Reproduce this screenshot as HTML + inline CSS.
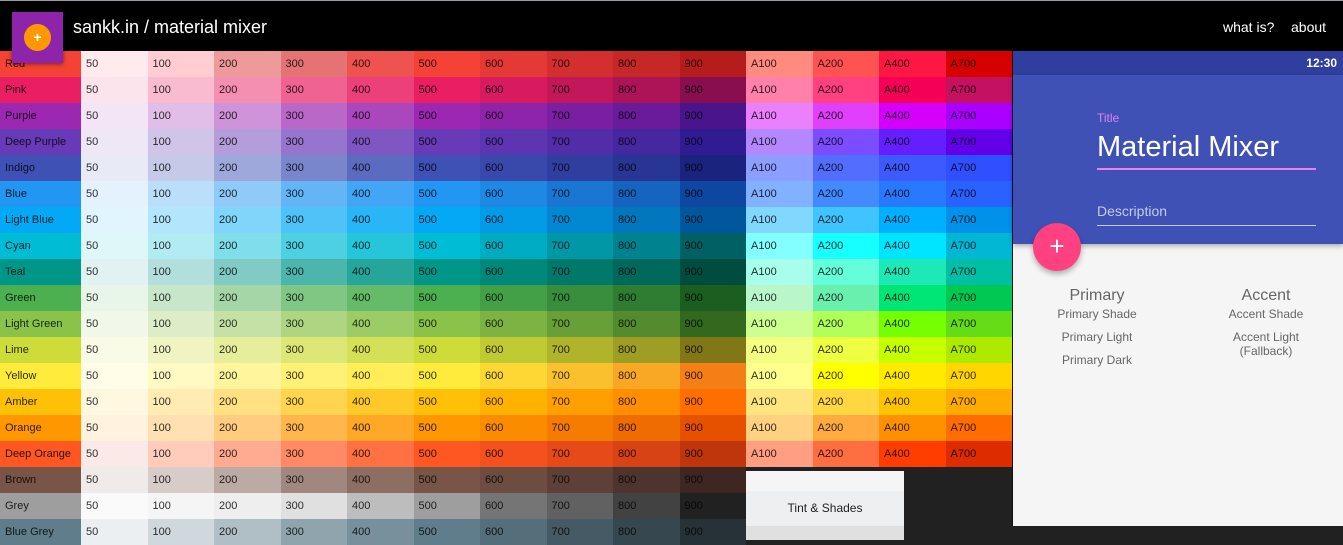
<!DOCTYPE html>
<html><head><meta charset="utf-8"><style>
*{margin:0;padding:0;box-sizing:border-box}
body{width:1343px;height:540px;overflow:hidden;background:#212121;font-family:"Liberation Sans",sans-serif;position:relative}
.hdr{position:absolute;left:0;top:0;width:1343px;height:51px;background:#000;border-top:1px solid #99a}
.grid{position:absolute;left:0;top:51px;display:grid;grid-template-columns:81px repeat(14,66.5px);grid-auto-rows:26px}
.grid div{font-size:11px;color:rgba(0,0,0,.82);line-height:26px;padding-left:5px;white-space:nowrap}
.logo{position:absolute;left:12px;top:12px;width:51px;height:51px;background:#8e24aa;box-shadow:0 1px 4px rgba(0,0,0,.5)}
.logo i{position:absolute;left:12px;top:12px;width:27px;height:27px;border-radius:50%;background:#ff9800;color:#fff;font-style:normal;font-size:14px;text-align:center;line-height:26px;font-weight:bold}
</style></head><body>
<div class="hdr">
<div style="position:absolute;left:73px;top:16px;color:#fff;font-size:18px">sankk.in / material mixer</div>
<div style="position:absolute;left:1223px;top:18px;color:#fff;font-size:14px">what is?</div>
<div style="position:absolute;left:1291px;top:18px;color:#fff;font-size:14px">about</div>
</div>
<div class="grid">
<div style="background:#f44336">Red</div><div style="background:#ffebee">50</div><div style="background:#ffcdd2">100</div><div style="background:#ef9a9a">200</div><div style="background:#e57373">300</div><div style="background:#ef5350">400</div><div style="background:#f44336">500</div><div style="background:#e53935">600</div><div style="background:#d32f2f">700</div><div style="background:#c62828">800</div><div style="background:#b71c1c">900</div><div style="background:#ff8a80">A100</div><div style="background:#ff5252">A200</div><div style="background:#ff1744">A400</div><div style="background:#d50000">A700</div>
<div style="background:#e91e63">Pink</div><div style="background:#fce4ec">50</div><div style="background:#f8bbd0">100</div><div style="background:#f48fb1">200</div><div style="background:#f06292">300</div><div style="background:#ec407a">400</div><div style="background:#e91e63">500</div><div style="background:#d81b60">600</div><div style="background:#c2185b">700</div><div style="background:#ad1457">800</div><div style="background:#880e4f">900</div><div style="background:#ff80ab">A100</div><div style="background:#ff4081">A200</div><div style="background:#f50057">A400</div><div style="background:#c51162">A700</div>
<div style="background:#9c27b0">Purple</div><div style="background:#f3e5f5">50</div><div style="background:#e1bee7">100</div><div style="background:#ce93d8">200</div><div style="background:#ba68c8">300</div><div style="background:#ab47bc">400</div><div style="background:#9c27b0">500</div><div style="background:#8e24aa">600</div><div style="background:#7b1fa2">700</div><div style="background:#6a1b9a">800</div><div style="background:#4a148c">900</div><div style="background:#ea80fc">A100</div><div style="background:#e040fb">A200</div><div style="background:#d500f9">A400</div><div style="background:#aa00ff">A700</div>
<div style="background:#673ab7">Deep Purple</div><div style="background:#ede7f6">50</div><div style="background:#d1c4e9">100</div><div style="background:#b39ddb">200</div><div style="background:#9575cd">300</div><div style="background:#7e57c2">400</div><div style="background:#673ab7">500</div><div style="background:#5e35b1">600</div><div style="background:#512da8">700</div><div style="background:#4527a0">800</div><div style="background:#311b92">900</div><div style="background:#b388ff">A100</div><div style="background:#7c4dff">A200</div><div style="background:#651fff">A400</div><div style="background:#6200ea">A700</div>
<div style="background:#3f51b5">Indigo</div><div style="background:#e8eaf6">50</div><div style="background:#c5cae9">100</div><div style="background:#9fa8da">200</div><div style="background:#7986cb">300</div><div style="background:#5c6bc0">400</div><div style="background:#3f51b5">500</div><div style="background:#3949ab">600</div><div style="background:#303f9f">700</div><div style="background:#283593">800</div><div style="background:#1a237e">900</div><div style="background:#8c9eff">A100</div><div style="background:#536dfe">A200</div><div style="background:#3d5afe">A400</div><div style="background:#304ffe">A700</div>
<div style="background:#2196f3">Blue</div><div style="background:#e3f2fd">50</div><div style="background:#bbdefb">100</div><div style="background:#90caf9">200</div><div style="background:#64b5f6">300</div><div style="background:#42a5f5">400</div><div style="background:#2196f3">500</div><div style="background:#1e88e5">600</div><div style="background:#1976d2">700</div><div style="background:#1565c0">800</div><div style="background:#0d47a1">900</div><div style="background:#82b1ff">A100</div><div style="background:#448aff">A200</div><div style="background:#2979ff">A400</div><div style="background:#2962ff">A700</div>
<div style="background:#03a9f4">Light Blue</div><div style="background:#e1f5fe">50</div><div style="background:#b3e5fc">100</div><div style="background:#81d4fa">200</div><div style="background:#4fc3f7">300</div><div style="background:#29b6f6">400</div><div style="background:#03a9f4">500</div><div style="background:#039be5">600</div><div style="background:#0288d1">700</div><div style="background:#0277bd">800</div><div style="background:#01579b">900</div><div style="background:#80d8ff">A100</div><div style="background:#40c4ff">A200</div><div style="background:#00b0ff">A400</div><div style="background:#0091ea">A700</div>
<div style="background:#00bcd4">Cyan</div><div style="background:#e0f7fa">50</div><div style="background:#b2ebf2">100</div><div style="background:#80deea">200</div><div style="background:#4dd0e1">300</div><div style="background:#26c6da">400</div><div style="background:#00bcd4">500</div><div style="background:#00acc1">600</div><div style="background:#0097a7">700</div><div style="background:#00838f">800</div><div style="background:#006064">900</div><div style="background:#84ffff">A100</div><div style="background:#18ffff">A200</div><div style="background:#00e5ff">A400</div><div style="background:#00b8d4">A700</div>
<div style="background:#009688">Teal</div><div style="background:#e0f2f1">50</div><div style="background:#b2dfdb">100</div><div style="background:#80cbc4">200</div><div style="background:#4db6ac">300</div><div style="background:#26a69a">400</div><div style="background:#009688">500</div><div style="background:#00897b">600</div><div style="background:#00796b">700</div><div style="background:#00695c">800</div><div style="background:#004d40">900</div><div style="background:#a7ffeb">A100</div><div style="background:#64ffda">A200</div><div style="background:#1de9b6">A400</div><div style="background:#00bfa5">A700</div>
<div style="background:#4caf50">Green</div><div style="background:#e8f5e9">50</div><div style="background:#c8e6c9">100</div><div style="background:#a5d6a7">200</div><div style="background:#81c784">300</div><div style="background:#66bb6a">400</div><div style="background:#4caf50">500</div><div style="background:#43a047">600</div><div style="background:#388e3c">700</div><div style="background:#2e7d32">800</div><div style="background:#1b5e20">900</div><div style="background:#b9f6ca">A100</div><div style="background:#69f0ae">A200</div><div style="background:#00e676">A400</div><div style="background:#00c853">A700</div>
<div style="background:#8bc34a">Light Green</div><div style="background:#f1f8e9">50</div><div style="background:#dcedc8">100</div><div style="background:#c5e1a5">200</div><div style="background:#aed581">300</div><div style="background:#9ccc65">400</div><div style="background:#8bc34a">500</div><div style="background:#7cb342">600</div><div style="background:#689f38">700</div><div style="background:#558b2f">800</div><div style="background:#33691e">900</div><div style="background:#ccff90">A100</div><div style="background:#b2ff59">A200</div><div style="background:#76ff03">A400</div><div style="background:#64dd17">A700</div>
<div style="background:#cddc39">Lime</div><div style="background:#f9fbe7">50</div><div style="background:#f0f4c3">100</div><div style="background:#e6ee9c">200</div><div style="background:#dce775">300</div><div style="background:#d4e157">400</div><div style="background:#cddc39">500</div><div style="background:#c0ca33">600</div><div style="background:#afb42b">700</div><div style="background:#9e9d24">800</div><div style="background:#827717">900</div><div style="background:#f4ff81">A100</div><div style="background:#eeff41">A200</div><div style="background:#c6ff00">A400</div><div style="background:#aeea00">A700</div>
<div style="background:#ffeb3b">Yellow</div><div style="background:#fffde7">50</div><div style="background:#fff9c4">100</div><div style="background:#fff59d">200</div><div style="background:#fff176">300</div><div style="background:#ffee58">400</div><div style="background:#ffeb3b">500</div><div style="background:#fdd835">600</div><div style="background:#fbc02d">700</div><div style="background:#f9a825">800</div><div style="background:#f57f17">900</div><div style="background:#ffff8d">A100</div><div style="background:#ffff00">A200</div><div style="background:#ffea00">A400</div><div style="background:#ffd600">A700</div>
<div style="background:#ffc107">Amber</div><div style="background:#fff8e1">50</div><div style="background:#ffecb3">100</div><div style="background:#ffe082">200</div><div style="background:#ffd54f">300</div><div style="background:#ffca28">400</div><div style="background:#ffc107">500</div><div style="background:#ffb300">600</div><div style="background:#ffa000">700</div><div style="background:#ff8f00">800</div><div style="background:#ff6f00">900</div><div style="background:#ffe57f">A100</div><div style="background:#ffd740">A200</div><div style="background:#ffc400">A400</div><div style="background:#ffab00">A700</div>
<div style="background:#ff9800">Orange</div><div style="background:#fff3e0">50</div><div style="background:#ffe0b2">100</div><div style="background:#ffcc80">200</div><div style="background:#ffb74d">300</div><div style="background:#ffa726">400</div><div style="background:#ff9800">500</div><div style="background:#fb8c00">600</div><div style="background:#f57c00">700</div><div style="background:#ef6c00">800</div><div style="background:#e65100">900</div><div style="background:#ffd180">A100</div><div style="background:#ffab40">A200</div><div style="background:#ff9100">A400</div><div style="background:#ff6d00">A700</div>
<div style="background:#ff5722">Deep Orange</div><div style="background:#fbe9e7">50</div><div style="background:#ffccbc">100</div><div style="background:#ffab91">200</div><div style="background:#ff8a65">300</div><div style="background:#ff7043">400</div><div style="background:#ff5722">500</div><div style="background:#f4511e">600</div><div style="background:#e64a19">700</div><div style="background:#d84315">800</div><div style="background:#bf360c">900</div><div style="background:#ff9e80">A100</div><div style="background:#ff6e40">A200</div><div style="background:#ff3d00">A400</div><div style="background:#dd2c00">A700</div>
<div style="background:#795548">Brown</div><div style="background:#efebe9">50</div><div style="background:#d7ccc8">100</div><div style="background:#bcaaa4">200</div><div style="background:#a1887f">300</div><div style="background:#8d6e63">400</div><div style="background:#795548">500</div><div style="background:#6d4c41">600</div><div style="background:#5d4037">700</div><div style="background:#4e342e">800</div><div style="background:#3e2723">900</div><div></div><div></div><div></div><div></div>
<div style="background:#9e9e9e">Grey</div><div style="background:#fafafa">50</div><div style="background:#f5f5f5">100</div><div style="background:#eeeeee">200</div><div style="background:#e0e0e0">300</div><div style="background:#bdbdbd">400</div><div style="background:#9e9e9e">500</div><div style="background:#757575">600</div><div style="background:#616161">700</div><div style="background:#424242">800</div><div style="background:#212121">900</div><div></div><div></div><div></div><div></div>
<div style="background:#607d8b">Blue Grey</div><div style="background:#eceff1">50</div><div style="background:#cfd8dc">100</div><div style="background:#b0bec5">200</div><div style="background:#90a4ae">300</div><div style="background:#78909c">400</div><div style="background:#607d8b">500</div><div style="background:#546e7a">600</div><div style="background:#455a64">700</div><div style="background:#37474f">800</div><div style="background:#263238">900</div><div></div><div></div><div></div><div></div>
</div>
<div class="logo"><i>+</i></div>
<div style="position:absolute;left:746px;top:471px;width:158px;height:69px;background:#e0e0e0">
<div style="height:20px;background:#f5f5f5"></div>
<div style="height:35px;background:#eeeff0;font-size:12px;color:#222;text-align:center;line-height:35px">Tint &amp; Shades</div>
</div>
<div style="position:absolute;left:1012px;top:51px;width:331px;height:475px;background:#f5f5f5;border-left:1px solid #111">
<div style="height:24px;background:#303f9f;color:#fff;font-size:12px;font-weight:bold;text-align:right;padding-right:6px;line-height:24px">12:30</div>
<div style="height:169px;background:#3f51b5;position:relative;box-shadow:0 2px 5px rgba(0,0,0,.3)">
<div style="position:absolute;left:84px;top:36px;color:#e080f0;font-size:12px">Title</div>
<div style="position:absolute;left:84px;top:56px;color:#fff;font-size:29px">Material Mixer</div>
<div style="position:absolute;left:84px;top:93px;width:219px;height:2px;background:#ea80fc"></div>
<div style="position:absolute;left:84px;top:128px;color:#c5cae9;font-size:14px">Description</div>
<div style="position:absolute;left:84px;top:150px;width:219px;height:1px;background:#c5cae9"></div>
</div>
<div style="position:absolute;left:20px;top:172px;width:48px;height:48px;border-radius:50%;background:#ff4081;color:#fff;font-size:26px;text-align:center;line-height:46px;box-shadow:0 3px 6px rgba(0,0,0,.3)">+</div>
<div style="position:absolute;left:14px;top:236px;width:140px;text-align:center;color:#666">
<div style="font-size:16px">Primary</div>
<div style="font-size:12px;margin-top:2px">Primary Shade</div>
<div style="font-size:12px;margin-top:9px">Primary Light</div>
<div style="font-size:12px;margin-top:9px">Primary Dark</div>
</div>
<div style="position:absolute;left:183px;top:236px;width:140px;text-align:center;color:#666">
<div style="font-size:16px">Accent</div>
<div style="font-size:12px;margin-top:2px">Accent Shade</div>
<div style="font-size:12px;margin-top:9px">Accent Light<br>(Fallback)</div>
</div>
</div>
</body></html>
